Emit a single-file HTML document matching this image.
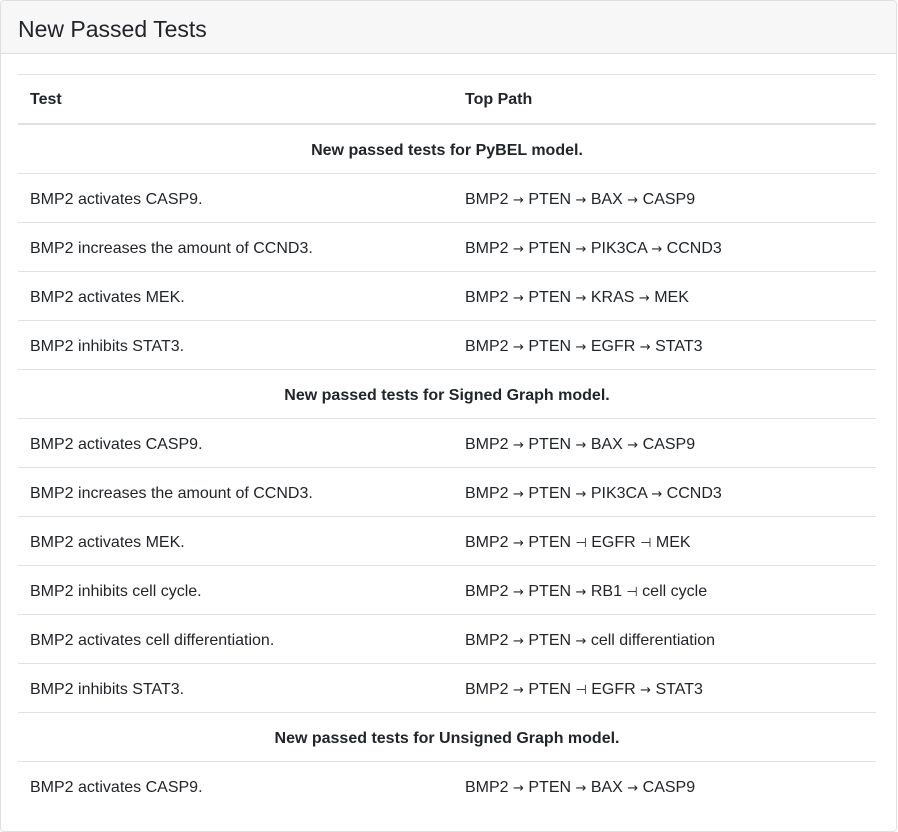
<!DOCTYPE html>
<html><head><meta charset="utf-8"><style>
body{margin:0;background:#fff;font-family:"Liberation Sans",Arial,sans-serif;color:#212529;}
.card{position:absolute;left:0;top:0;width:895px;height:830px;border:1px solid #dfdfdf;border-radius:4px;overflow:hidden}
.hdr{height:52px;background:#f7f7f7;border-bottom:1px solid #dfdfdf;font-size:23px;line-height:56px;padding-left:17px;}
table{position:absolute;left:17px;top:73px;width:858px;border-collapse:collapse;font-size:16px}
td,th{height:45px;padding:3px 12px 0 12px;border-top:1px solid #dee2e6;text-align:left;vertical-align:middle}
th{font-weight:bold;border-bottom:2px solid #dee2e6;height:46px;padding-top:2px}
td.c{text-align:center;font-weight:bold}
col.a{width:435px}
.r{font-family:"DejaVu Sans",sans-serif;font-size:13px}
</style></head><body>
<div class="card"><div class="hdr">New Passed Tests</div>
<table><colgroup><col class="a"><col></colgroup>
<tr><th>Test</th><th>Top Path</th></tr>
<tr><td class="c" colspan="2">New passed tests for PyBEL model.</td></tr>
<tr><td>BMP2 activates CASP9.</td><td>BMP2 <span class="r">→</span> PTEN <span class="r">→</span> BAX <span class="r">→</span> CASP9</td></tr>
<tr><td>BMP2 increases the amount of CCND3.</td><td>BMP2 <span class="r">→</span> PTEN <span class="r">→</span> PIK3CA <span class="r">→</span> CCND3</td></tr>
<tr><td>BMP2 activates MEK.</td><td>BMP2 <span class="r">→</span> PTEN <span class="r">→</span> KRAS <span class="r">→</span> MEK</td></tr>
<tr><td>BMP2 inhibits STAT3.</td><td>BMP2 <span class="r">→</span> PTEN <span class="r">→</span> EGFR <span class="r">→</span> STAT3</td></tr>
<tr><td class="c" colspan="2">New passed tests for Signed Graph model.</td></tr>
<tr><td>BMP2 activates CASP9.</td><td>BMP2 <span class="r">→</span> PTEN <span class="r">→</span> BAX <span class="r">→</span> CASP9</td></tr>
<tr><td>BMP2 increases the amount of CCND3.</td><td>BMP2 <span class="r">→</span> PTEN <span class="r">→</span> PIK3CA <span class="r">→</span> CCND3</td></tr>
<tr><td>BMP2 activates MEK.</td><td>BMP2 <span class="r">→</span> PTEN <span class="r">⊣</span> EGFR <span class="r">⊣</span> MEK</td></tr>
<tr><td>BMP2 inhibits cell cycle.</td><td>BMP2 <span class="r">→</span> PTEN <span class="r">→</span> RB1 <span class="r">⊣</span> cell cycle</td></tr>
<tr><td>BMP2 activates cell differentiation.</td><td>BMP2 <span class="r">→</span> PTEN <span class="r">→</span> cell differentiation</td></tr>
<tr><td>BMP2 inhibits STAT3.</td><td>BMP2 <span class="r">→</span> PTEN <span class="r">⊣</span> EGFR <span class="r">→</span> STAT3</td></tr>
<tr><td class="c" colspan="2">New passed tests for Unsigned Graph model.</td></tr>
<tr><td>BMP2 activates CASP9.</td><td>BMP2 <span class="r">→</span> PTEN <span class="r">→</span> BAX <span class="r">→</span> CASP9</td></tr>
</table></div>
</body></html>
